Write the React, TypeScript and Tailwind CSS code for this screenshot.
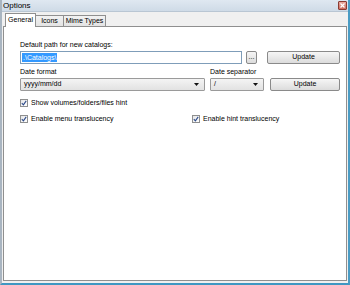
import * as React from 'react'

function Button({ label, w }: { label: string; w: string }) {
  return (
    <div
      className={`${w} h-[13px] flex items-center justify-center rounded-[2px] border border-[#8a8a8a] bg-gradient-to-b from-[#f6f6f6] to-[#dcdcdc] text-[7px] text-black`}
    >
      {label}
    </div>
  )
}

function Select({ value, w }: { value: string; w: string }) {
  return (
    <div
      className={`${w} h-[13px] flex items-center justify-between rounded-[1px] border border-[#9a9a9a] bg-gradient-to-b from-[#f4f4f4] to-[#e2e2e2] pl-[3px] pr-[5px] text-[7px] text-black`}
    >
      <span>{value}</span>
      <svg width="5" height="3" viewBox="0 0 5 3">
        <path d="M0 0h5L2.5 3z" fill="#111" />
      </svg>
    </div>
  )
}

function Check({ label }: { label: string }) {
  return (
    <div className="flex items-center gap-[3px] text-[7px] text-black">
      <div className="w-[8px] h-[8px] border border-[#8e8f8f] bg-gradient-to-br from-[#e6e6e6] to-white flex items-center justify-center">
        <svg width="6" height="6" viewBox="0 0 6 6">
          <path d="M0.8 3.2 L2.4 4.8 L5.2 0.9" fill="none" stroke="#2c4a8a" strokeWidth="1.1" />
        </svg>
      </div>
      <span>{label}</span>
    </div>
  )
}

export default function App() {
  return (
    <div
      className="w-[350px] h-[285px] flex flex-col bg-[#f0f0f0] border-l-[2px] border-r-[2px] border-b-[2px] border-l-[#a9b5c1] border-r-[#4a9cc4] border-b-[#3f97c2] overflow-hidden"
      style={{ fontFamily: '"Liberation Sans", Arial, sans-serif' }}
    >
      {/* TITLE BAR */}
      <div className="h-[12px] flex items-center justify-between bg-gradient-to-b from-[#dfe8f1] to-[#cfdbe7] pl-[1px] pr-[1px] border-b border-[#b9c6d3]">
        <span className="text-[8px] text-black leading-none">Options</span>
        <div className="w-[9px] h-[9px] rounded-[1px] border border-[#8a3c33] bg-gradient-to-b from-[#e9a89d] to-[#cf6f60] flex items-center justify-center">
          <svg width="5" height="5" viewBox="0 0 5 5">
            <path d="M0.5 0.5L4.5 4.5M4.5 0.5L0.5 4.5" stroke="#fff" strokeWidth="1.2" />
          </svg>
        </div>
      </div>

      {/* TABS */}
      <div className="h-[14px] flex items-end pl-[3px] text-[7px] text-black">
        <div className="h-[14px] w-[31px] bg-white border border-b-0 border-[#8f8f8f] flex items-center justify-center relative z-10 -mb-px pb-[1px]">
          General
        </div>
        <div className="h-[11px] w-[28px] bg-gradient-to-b from-[#f2f2f2] to-[#e3e3e3] border border-l-0 border-b-0 border-[#8f8f8f] flex items-center justify-center">
          Icons
        </div>
        <div className="h-[11px] w-[42px] bg-gradient-to-b from-[#f2f2f2] to-[#e3e3e3] border border-l-0 border-b-0 border-[#8f8f8f] flex items-center justify-center">
          Mime Types
        </div>
      </div>

      {/* PANEL */}
      <div className="flex-1 mx-[1px] mb-[2px] bg-white border border-[#8f8f8f] pl-[16px] pt-[14px] text-[7px] text-black">
        <div className="leading-none mb-[3px]">Default path for new catalogs:</div>
        <div className="flex items-center">
          <div className="w-[222px] h-[13px] border border-[#7f9db9] bg-white flex items-center pl-[1px]">
            <span className="bg-[#3399ff] text-white px-[1px] leading-[9px]">.\Catalogs\</span>
          </div>
          <div className="ml-[4px]">
            <Button label="..." w="w-[11px]" />
          </div>
          <div className="ml-[10px]">
            <Button label="Update" w="w-[73px]" />
          </div>
        </div>

        <div className="flex items-end mt-[4px]">
          <div className="flex flex-col">
            <div className="leading-none mb-[3px]">Date format</div>
            <Select value="yyyy/mm/dd" w="w-[185px]" />
          </div>
          <div className="flex flex-col ml-[5px]">
            <div className="leading-none mb-[3px]">Date separator</div>
            <Select value="/" w="w-[54px]" />
          </div>
          <div className="ml-[6px]">
            <Button label="Update" w="w-[70px]" />
          </div>
        </div>

        <div className="mt-[7px]">
          <Check label="Show volumes/folders/files hint" />
        </div>
        <div className="mt-[5px] flex">
          <div className="w-[172px]">
            <Check label="Enable menu translucency" />
          </div>
          <Check label="Enable hint translucency" />
        </div>
      </div>
    </div>
  )
}
